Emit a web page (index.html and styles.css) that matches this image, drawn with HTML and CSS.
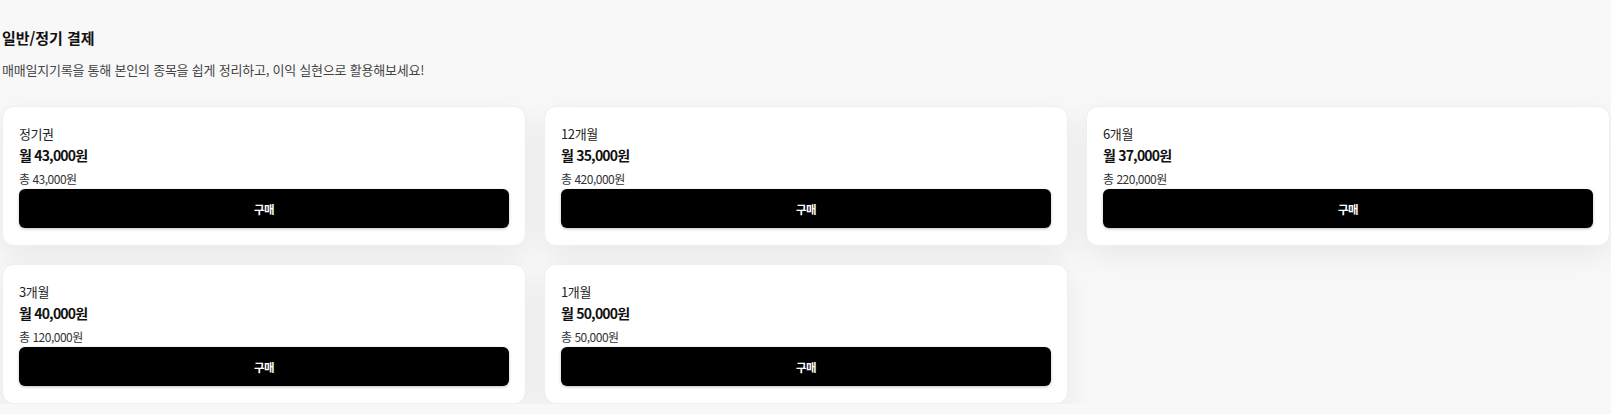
FILE: index.html
```html
<!DOCTYPE html>
<html lang="ko">
<head>
<meta charset="utf-8">
<title>일반/정기 결제</title>
<link rel="stylesheet" href="styles.css">
</head>
<body>
<main class="page">
  <h2 class="title">일반/정기 결제</h2>
  <p class="desc">매매일지기록을 통해 본인의 종목을 쉽게 정리하고, 이익 실현으로 활용해보세요!</p>
  <div class="plans">
    <div class="card">
      <div class="plan-name">정기권</div>
      <div class="plan-price">월 43,000원</div>
      <div class="plan-total">총 43,000원</div>
      <button class="buy">구매</button>
    </div>
    <div class="card">
      <div class="plan-name">12개월</div>
      <div class="plan-price">월 35,000원</div>
      <div class="plan-total">총 420,000원</div>
      <button class="buy">구매</button>
    </div>
    <div class="card">
      <div class="plan-name">6개월</div>
      <div class="plan-price">월 37,000원</div>
      <div class="plan-total">총 220,000원</div>
      <button class="buy">구매</button>
    </div>
    <div class="card">
      <div class="plan-name">3개월</div>
      <div class="plan-price">월 40,000원</div>
      <div class="plan-total">총 120,000원</div>
      <button class="buy">구매</button>
    </div>
    <div class="card">
      <div class="plan-name">1개월</div>
      <div class="plan-price">월 50,000원</div>
      <div class="plan-total">총 50,000원</div>
      <button class="buy">구매</button>
    </div>
  </div>
</main>
</body>
</html>
```
FILE: styles.css
```css
* { box-sizing: border-box; }
html, body {
  margin: 0;
  background: #f8f8f8;
}
body {
  font-family: "Noto Sans CJK KR", "Noto Sans", sans-serif;
  color: #111;
}
.page {
  padding: 27px 1px 0 2px;
}
.title {
  margin: 0;
  font-size: 15px;
  line-height: 22px;
  font-weight: 700;
  letter-spacing: -0.05px;
  color: #111;
}
.desc {
  margin: 12px 0 0;
  font-size: 13px;
  line-height: 18px;
  letter-spacing: -0.22px;
  color: #444;
}
.plans {
  margin-top: 27px;
  display: grid;
  grid-template-columns: repeat(3, 1fr);
  gap: 18px;
}
.card {
  background: #fff;
  border: 1px solid #efefef;
  border-radius: 12px;
  padding: 17px 16px 17px;
  box-shadow: 0 10px 30px rgba(0, 0, 0, 0.065);
  display: flex;
  flex-direction: column;
}
.plan-name {
  font-size: 13px;
  line-height: 20px;
  letter-spacing: -0.4px;
  color: #222;
}
.plan-price {
  font-size: 14px;
  line-height: 22px;
  font-weight: 700;
  letter-spacing: -0.8px;
  color: #111;
}
.plan-total {
  margin-top: 4px;
  font-size: 12px;
  line-height: 18px;
  letter-spacing: -0.5px;
  color: #333;
}
.buy {
  margin-top: 1px;
  height: 39px;
  width: 100%;
  border: none;
  border-radius: 6px;
  background: #000;
  color: #fff;
  font-family: inherit;
  font-size: 11.5px;
  font-weight: 700;
  letter-spacing: -0.5px;
  box-shadow: 0 1px 3px rgba(0, 0, 0, 0.25);
  cursor: pointer;
}
```
